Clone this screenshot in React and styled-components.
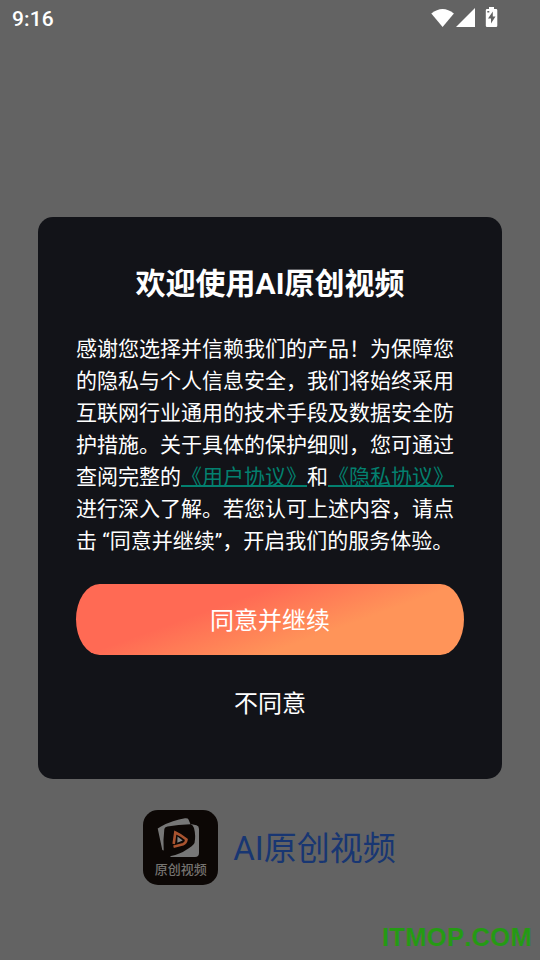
import React from 'react';
import styled, { createGlobalStyle } from 'styled-components';

const GlobalStyle = createGlobalStyle`
  * { box-sizing: border-box; }
  body {
    margin: 0;
    background: #636363;
    font-family: Roboto, "Noto Sans CJK SC", sans-serif;
  }
`;

const Screen = styled.div`
  width: 540px;
  height: 960px;
  background: #636363;
  display: flex;
  flex-direction: column;
  align-items: center;
  position: relative;
  overflow: hidden;
`;

const StatusBar = styled.header`
  width: 100%;
  height: 37px;
  flex: none;
  padding: 0 41px 0 12px;
  display: flex;
  align-items: center;
  justify-content: space-between;
  color: #fff;
`;

const Clock = styled.time`
  font-size: 21px;
  line-height: 24px;
  font-weight: 500;
  letter-spacing: 0.1px;
`;

const StatusIcons = styled.svg`
  display: block;
  width: 70px;
  height: 24px;
  margin-top: -2px;
`;

const Dialog = styled.main`
  width: 464px;
  height: 562px;
  flex: none;
  margin-top: 180px;
  padding: 45px 38px 0;
  border-radius: 15px;
  background: #121318;
  color: #fff;
  display: flex;
  flex-direction: column;
  align-items: center;
`;

const Title = styled.h1`
  margin: 0;
  font-size: 30px;
  line-height: 44px;
  font-weight: 700;
  white-space: nowrap;
`;

const Message = styled.div`
  width: 388px;
  margin-top: 27px;
  font-size: 21px;
  line-height: 32px;
`;

const Line = styled.div`
  white-space: pre;
  height: 32px;
`;

const PolicyLink = styled.a`
  color: #03806f;
  text-decoration: underline;
  text-decoration-thickness: 1.5px;
  text-underline-offset: 1px;
`;

const Button = styled.button`
  border: 0;
  padding: 2px 0 0;
  width: 388px;
  flex: none;
  font-family: inherit;
  font-size: 24px;
  line-height: 36px;
  color: #fff;
  background: none;
`;

const AgreeButton = styled(Button)`
  height: 71px;
  margin-top: 27px;
  border-radius: 24px / 36px;
  background: linear-gradient(160deg, #ff6a54 35%, #ff9459 66%);
`;

const DeclineButton = styled(Button)`
  height: 48px;
  margin-top: 24px;
`;

const Brand = styled.footer`
  display: flex;
  align-items: center;
  gap: 15px;
  margin: 31px 1px 0 0;
  height: 75px;
`;

const AppIcon = styled.div`
  width: 75px;
  height: 75px;
  border-radius: 15px;
  background: #0c0705;
  display: flex;
  flex-direction: column;
  align-items: center;
`;

const AppMark = styled.svg`
  display: block;
  width: 75px;
  height: 50px;
  flex: none;
`;

const AppLabel = styled.span`
  font-size: 13px;
  line-height: 19px;
  font-weight: 500;
  color: #767370;
`;

const BrandName = styled.span`
  padding-top: 3px;
  font-size: 33px;
  line-height: 48px;
  color: #183672;
  white-space: nowrap;
`;

const Watermark = styled.span`
  position: absolute;
  right: 8px;
  bottom: 8px;
  font-family: "Liberation Sans", sans-serif;
  font-size: 25.5px;
  line-height: 30px;
  font-weight: 700;
  font-kerning: none;
  letter-spacing: 0.3px;
  color: #259a14;
`;

export default function App() {
  return (
    <>
      <GlobalStyle />
      <Screen>
        <StatusBar>
          <Clock>9:16</Clock>
          <StatusIcons viewBox="0 0 70 24" fill="#fff">
            <path d="M2.300 7.500Q13.600-1.500 24.900 7.500L13.600 21Z" />
            <path d="M27 21L46 2V21Z" />
            <path
              fillRule="evenodd"
              d="M60 1h5v2h2q1.300 0 1.300 1.300v15.400q0 1.300-1.300 1.300h-8.900q-1.300 0-1.300-1.300V4.300q0-1.300 1.300-1.300H60zM63.800 5.500l-4.800 7h3v5l4.500-7h-2.700zM58.300 5h2v1.500h-2z"
            />
          </StatusIcons>
        </StatusBar>
        <Dialog>
          <Title>欢迎使用AI原创视频</Title>
          <Message>
            <Line>感谢您选择并信赖我们的产品！为保障您</Line>
            <Line>的隐私与个人信息安全，我们将始终采用</Line>
            <Line>互联网行业通用的技术手段及数据安全防</Line>
            <Line>护措施。关于具体的保护细则，您可通过</Line>
            <Line>
              查阅完整的<PolicyLink>《用户协议》</PolicyLink>和<PolicyLink>《隐私协议》</PolicyLink>
            </Line>
            <Line>进行深入了解。若您认可上述内容，请点</Line>
            <Line>击 “同意并继续”，开启我们的服务体验。</Line>
          </Message>
          <AgreeButton>同意并继续</AgreeButton>
          <DeclineButton>不同意</DeclineButton>
        </Dialog>
        <Brand>
          <AppIcon>
            <AppMark viewBox="0 0 75 50">
              <path
                fill="#777777"
                d="M14.700 18.500L18 16.500Q30 10 42 8.300Q45 8 45.500 9.500L47.500 14.200Q35 14.500 24.500 16.500Q21.500 17 21.300 19.500Q20 30 20.700 40.500L19.300 40Z"
              />
              <path
                fill="#777777"
                d="M47.500 14L53.500 15.200Q56 16 56 19V43Q56 47 52 47H27L28 46Q37 44 43 40Q50 36 51.500 33Q53 26 51 18Q50 15 47.500 14Z"
              />
              <path
                fill="none"
                stroke="#a9532f"
                strokeWidth="2.600"
                d="M30.700 34L32.300 22.500Q38 25 43.500 29.500Q43 33 40 34.300L30.500 36.800"
              />
              <path fill="#858585" d="M34.500 26.500L39.700 30.500L34.300 32.800Z" />
            </AppMark>
            <AppLabel>原创视频</AppLabel>
          </AppIcon>
          <BrandName>AI原创视频</BrandName>
        </Brand>
        <Watermark>ITMOP.COM</Watermark>
      </Screen>
    </>
  );
}
